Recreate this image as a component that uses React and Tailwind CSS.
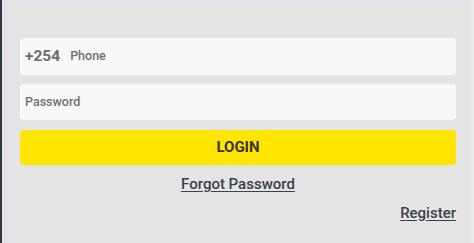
import React from 'react';

const LoginCard = () => {
    return (
        <div className="w-[474px] h-[243px] flex bg-[#e4e4e4] font-['Roboto',sans-serif]">
            {/* Dark edge on the left */}
            <div className="w-[2px] h-full bg-[#2c3843]" />
            <div className="flex-1 flex flex-col">
                <div className="h-[3px] bg-[#e3e3ec]" />
                <div className="flex-1 flex flex-col pl-[18px] pr-[15px] pt-[35px]">
                    <div className="h-[37px] bg-[#f8f8f8] rounded-[4px] flex items-center pl-[5px] gap-[10px]">
                        <span className="text-[15.5px] font-bold text-[#6c6c6c]">+254</span>
                        <span className="text-[12.5px] font-medium text-[#707070]">Phone</span>
                    </div>
                    <div className="mt-[9px] h-[36px] bg-[#f8f8f8] rounded-[4px] flex items-center pl-[5px]">
                        <span className="text-[12.5px] font-medium text-[#707070]">Password</span>
                    </div>
                    <button className="mt-[10px] h-[35px] bg-[#ffe500] rounded-[4px] flex items-center justify-center text-[15px] font-bold text-[#333333]">
                        LOGIN
                    </button>
                    <div className="mt-[8px] flex justify-center">
                        <a className="text-[15px] font-medium text-[#3a414d] underline underline-offset-2">Forgot Password</a>
                    </div>
                    <div className="mt-[6px] flex justify-end">
                        <a className="text-[15px] font-medium text-[#3a414d] underline underline-offset-2">Register</a>
                    </div>
                </div>
            </div>
            <div className="w-[3px] h-full bg-[#ececef]" />
        </div>
    );
};

export default function App() {
    return <LoginCard />;
}
